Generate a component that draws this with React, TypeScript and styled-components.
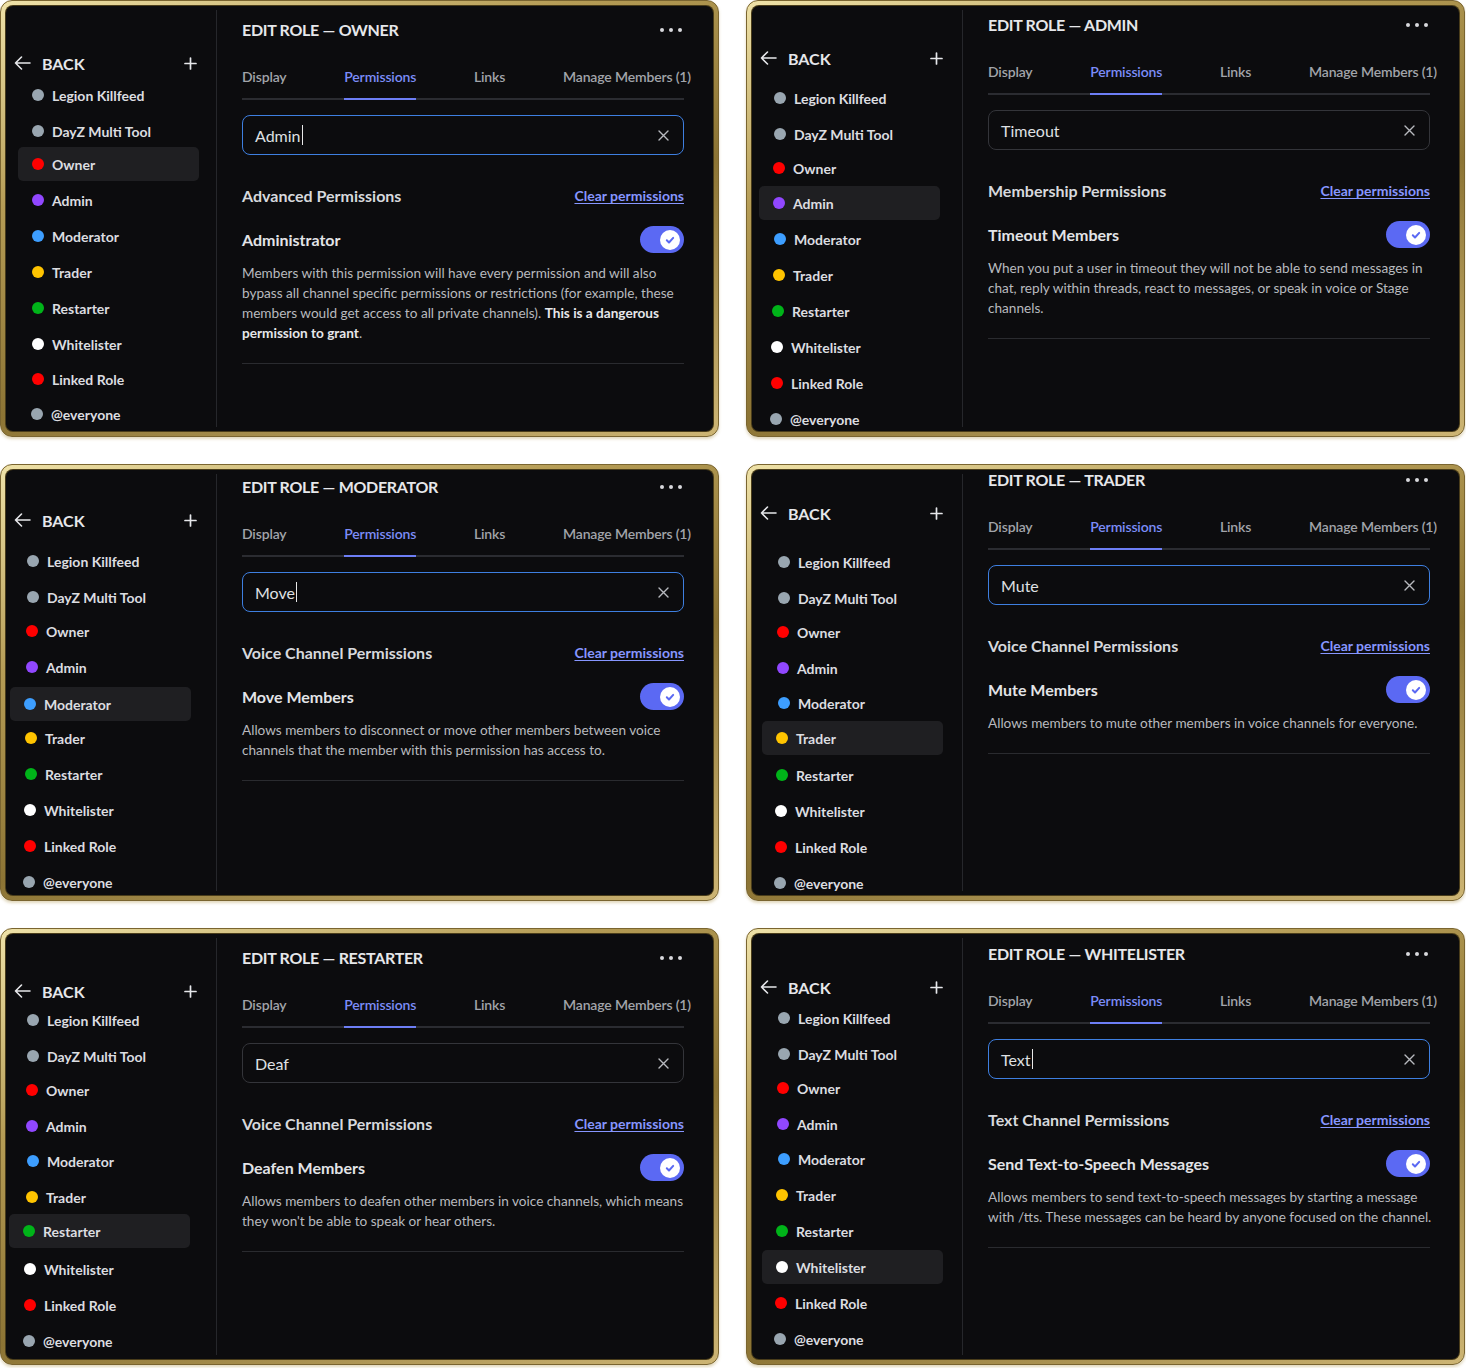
import React from "react";
import styled, { createGlobalStyle } from "styled-components";

const Global = createGlobalStyle`
  html, body { margin: 0; padding: 0; background: #ffffff; }
  body { font-family: Lato, "Noto Sans", sans-serif; -webkit-font-smoothing: antialiased; }
  * { box-sizing: border-box; }
`;

const Page = styled.div`
  display: grid;
  grid-template-columns: 719px 719px;
  grid-auto-rows: 437px;
  column-gap: 27px;
  row-gap: 27px;
  width: 1466px;
  height: 1368px;
`;

const Frame = styled.div`
  border-radius: 12px;
  padding: 5px;
  border: 1px solid #7a6530;
  background: linear-gradient(160deg, #efe2a8 0%, #b59c55 30%, #8c7434 60%, #cdb574 100%);
  box-shadow: 0 2px 3px rgba(190, 170, 110, 0.45);
`;

const Inner = styled.div`
  height: 100%;
  border-radius: 7px;
  background: #0c0c0e;
  box-shadow: 0 0 0 1px #4a3d1a;
  display: grid;
  grid-template-columns: 211px 1fr;
  overflow: hidden;
`;

const Sidebar = styled.div`
  margin: 4px 0;
  border-right: 1px solid #26272b;
  display: flex;
  flex-direction: column;
  overflow: hidden;
`;

const BackRow = styled.div<{ $top: number }>`
  margin-top: ${(p) => p.$top}px;
  height: 20px;
  display: flex;
  align-items: center;
  padding-left: 8px;
  padding-right: 19px;
  color: #e6e7ea;
  flex-shrink: 0;
`;

const BackLabel = styled.span`
  margin-left: 11px;
  font-size: 16px;
  font-weight: 700;
`;

const PlusWrap = styled.span`
  margin-left: auto;
  display: flex;
`;

const RoleItem = styled.div<{ $mt: number; $ml: number; $active: boolean }>`
  flex-shrink: 0;
  margin-top: ${(p) => p.$mt}px;
  margin-left: ${(p) => p.$ml}px;
  width: 181px;
  height: 34px;
  border-radius: 5px;
  background: ${(p) => (p.$active ? "#1f1f22" : "transparent")};
  display: flex;
  align-items: center;
  padding-left: 14px;
  gap: 8px;
  font-size: 14px;
  font-weight: 700;
  color: #dcdde0;
`;

const Dot = styled.span<{ $c: string }>`
  width: 12px;
  height: 12px;
  border-radius: 50%;
  background: ${(p) => p.$c};
  flex-shrink: 0;
`;

const Main = styled.div<{ $top: number }>`
  padding: ${(p) => p.$top}px 0 0 25px;
  display: flex;
  flex-direction: column;
  width: 466px;
`;

const TitleRow = styled.div`
  height: 20px;
  display: flex;
  align-items: center;
  justify-content: space-between;
  width: 442px;
`;

const Title = styled.h2`
  margin: 0;
  font-size: 16px;
  font-weight: 700;
  letter-spacing: -0.3px;
  color: #e6e7ea;
  line-height: 20px;
`;

const More = styled.div`
  display: flex;
  gap: 5px;
  margin-right: 2px;
`;

const MoreDot = styled.span`
  width: 4px;
  height: 4px;
  border-radius: 50%;
  background: #d8d9dc;
`;

const TabBar = styled.div`
  margin-top: 27px;
  border-bottom: 2px solid #2b2c31;
  width: 442px;
`;

const TabList = styled.div`
  display: flex;
  justify-content: space-between;
  margin-right: -7px;
`;

const Tab = styled.div<{ $active: boolean }>`
  font-size: 14px;
  font-weight: 600;
  line-height: 20px;
  letter-spacing: -0.15px;
  padding-bottom: 11px;
  margin-bottom: -2px;
  color: ${(p) => (p.$active ? "#7c8cf8" : "#a2a4aa")};
  border-bottom: 2px solid ${(p) => (p.$active ? "#6d7ef5" : "transparent")};
`;

const Search = styled.div<{ $focused: boolean }>`
  margin-top: 15px;
  width: 442px;
  height: 40px;
  border-radius: 8px;
  border: 1px solid ${(p) => (p.$focused ? "#3e7fe0" : "#34353a")};
  display: flex;
  align-items: center;
  padding: 0 14px 0 12px;
  font-size: 16px;
  color: #dfe0e3;
`;

const Caret = styled.span`
  display: inline-block;
  width: 1px;
  height: 20px;
  background: #e8e8e8;
  margin-left: 1px;
`;

const Query = styled.span`
  flex: 1;
  display: flex;
  align-items: center;
`;

const SectionHead = styled.div`
  margin-top: 31px;
  width: 442px;
  display: flex;
  justify-content: space-between;
  align-items: center;
  line-height: 20px;
`;

const SectionTitle = styled.span`
  font-size: 16px;
  font-weight: 700;
  color: #d7d9dd;
`;

const ClearLink = styled.a`
  font-size: 14px;
  font-weight: 700;
  color: #8796ff;
  text-decoration: underline;
  text-underline-offset: 2px;
`;

const PermRow = styled.div`
  margin-top: 20px;
  width: 442px;
  height: 27px;
  display: flex;
  justify-content: space-between;
  align-items: center;
`;

const PermName = styled.span`
  font-size: 16px;
  font-weight: 700;
  color: #e3e4e7;
`;

const Toggle = styled.div`
  width: 44px;
  height: 27px;
  border-radius: 14px;
  background: #5b69f3;
  display: flex;
  align-items: center;
  justify-content: flex-end;
  padding-right: 4px;
`;

const Knob = styled.span`
  width: 20px;
  height: 20px;
  border-radius: 50%;
  background: #ffffff;
  display: flex;
  align-items: center;
  justify-content: center;
`;

const Desc = styled.p`
  margin: 10px 0 0;
  width: 444px;
  font-size: 13.6px;
  line-height: 20px;
  color: #b8babf;
  strong { color: #e6e7ea; font-weight: 700; }
`;

const Divider = styled.div`
  margin-top: 20px;
  width: 442px;
  height: 1px;
  background: #2a2b2f;
`;

const ROLES: { name: string; color: string }[] = [
  { name: "Legion Killfeed", color: "#99a6b0" },
  { name: "DayZ Multi Tool", color: "#99a6b0" },
  { name: "Owner", color: "#ff0000" },
  { name: "Admin", color: "#9147ff" },
  { name: "Moderator", color: "#3d9eff" },
  { name: "Trader", color: "#ffc400" },
  { name: "Restarter", color: "#00b419" },
  { name: "Whitelister", color: "#ffffff" },
  { name: "Linked Role", color: "#ff0000" },
  { name: "@everyone", color: "#99a6b0" },
];

type PanelData = {
  role: string;
  titleY: number;
  selected: number;
  query: string;
  focused: boolean;
  caret: boolean;
  heading: string;
  perm: string;
  desc: React.ReactNode;
  ys: number[];
  xs: number[];
};

const PANELS: PanelData[] = [
  {
    role: "OWNER",
    titleY: 30,
    selected: 2,
    query: "Admin",
    focused: true,
    caret: true,
    heading: "Advanced Permissions",
    perm: "Administrator",
    desc: (
      <>
        Members with this permission will have every permission and will also bypass all channel specific
        permissions or restrictions (for example, these members would get access to all private channels).{" "}
        <strong>This is a dangerous permission to grant</strong>.
      </>
    ),
    ys: [66, 102, 135, 171, 207, 243, 279, 315, 350, 385],
    xs: [52, 52, 52, 52, 52, 52, 52, 52, 52, 51],
  },
  {
    role: "ADMIN",
    titleY: 25,
    selected: 3,
    query: "Timeout",
    focused: false,
    caret: false,
    heading: "Membership Permissions",
    perm: "Timeout Members",
    desc: (
      <>
        When you put a user in timeout they will not be able to send messages in chat, reply within threads,
        react to messages, or speak in voice or Stage channels.
      </>
    ),
    ys: [74, 110, 144, 179, 215, 251, 287, 323, 359, 395],
    xs: [48, 48, 47, 47, 48, 47, 46, 45, 45, 44],
  },
  {
    role: "MODERATOR",
    titleY: 23,
    selected: 4,
    query: "Move",
    focused: true,
    caret: true,
    heading: "Voice Channel Permissions",
    perm: "Move Members",
    desc: (
      <>
        Allows members to disconnect or move other members between voice channels that the member with this
        permission has access to.
      </>
    ),
    ys: [75, 111, 145, 181, 218, 252, 288, 324, 360, 396],
    xs: [47, 47, 46, 46, 44, 45, 45, 44, 44, 43],
  },
  {
    role: "TRADER",
    titleY: 16,
    selected: 5,
    query: "Mute",
    focused: true,
    caret: false,
    heading: "Voice Channel Permissions",
    perm: "Mute Members",
    desc: <>Allows members to mute other members in voice channels for everyone.</>,
    ys: [83, 119, 153, 189, 224, 259, 296, 332, 368, 404],
    xs: [52, 52, 51, 51, 52, 50, 50, 49, 49, 48],
  },
  {
    role: "RESTARTER",
    titleY: 30,
    selected: 6,
    query: "Deaf",
    focused: false,
    caret: false,
    heading: "Voice Channel Permissions",
    perm: "Deafen Members",
    desc: (
      <>
        Allows members to deafen other members in voice channels, which means they won't be able to speak or
        hear others.
      </>
    ),
    ys: [63, 99, 133, 169, 204, 240, 274, 312, 348, 384],
    xs: [47, 47, 46, 46, 47, 46, 43, 44, 44, 43],
  },
  {
    role: "WHITELISTER",
    titleY: 26,
    selected: 7,
    query: "Text",
    focused: true,
    caret: true,
    heading: "Text Channel Permissions",
    perm: "Send Text-to-Speech Messages",
    desc: (
      <>
        Allows members to send text-to-speech messages by starting a message with /tts. These messages can be
        heard by anyone focused on the channel.
      </>
    ),
    ys: [65, 101, 135, 171, 206, 242, 278, 314, 350, 386],
    xs: [52, 52, 51, 51, 52, 50, 50, 50, 49, 48],
  },
];

const ArrowLeft = () => (
  <svg width="17" height="14" viewBox="0 0 17 14" fill="none" stroke="#e6e7ea" strokeWidth="1.6" strokeLinecap="round" strokeLinejoin="round">
    <path d="M16 7H1.5M7.5 1L1.5 7l6 6" />
  </svg>
);

const Plus = () => (
  <svg width="13" height="13" viewBox="0 0 13 13" fill="none" stroke="#e6e7ea" strokeWidth="1.7" strokeLinecap="round">
    <path d="M6.5 1v11M1 6.5h11" />
  </svg>
);

const Close = () => (
  <svg width="11" height="11" viewBox="0 0 11 11" fill="none" stroke="#b8babf" strokeWidth="1.4" strokeLinecap="round">
    <path d="M1 1l9 9M10 1l-9 9" />
  </svg>
);

const Check = () => (
  <svg width="12" height="12" viewBox="0 0 12 12" fill="none" stroke="#5b69f3" strokeWidth="2" strokeLinecap="round" strokeLinejoin="round">
    <path d="M2.8 6.3l2.2 2.2 4.2-4.6" />
  </svg>
);

const Panel = ({ d }: { d: PanelData }) => (
  <Frame>
    <Inner>
      <Sidebar>
        <BackRow $top={d.titleY + 13}>
          <ArrowLeft />
          <BackLabel>BACK</BackLabel>
          <PlusWrap>
            <Plus />
          </PlusWrap>
        </BackRow>
        {ROLES.map((r, i) => (
          <RoleItem
            key={r.name}
            $active={i === d.selected}
            $ml={d.xs[i] - 40}
            $mt={i === 0 ? d.ys[0] - 61 : d.ys[i] - d.ys[i - 1] - 34}
          >
            <Dot $c={r.color} />
            {r.name}
          </RoleItem>
        ))}
      </Sidebar>
      <Main $top={d.titleY - 16}>
        <TitleRow>
          <Title>EDIT ROLE — {d.role}</Title>
          <More>
            <MoreDot />
            <MoreDot />
            <MoreDot />
          </More>
        </TitleRow>
        <TabBar>
          <TabList>
            <Tab $active={false}>Display</Tab>
            <Tab $active>Permissions</Tab>
            <Tab $active={false}>Links</Tab>
            <Tab $active={false}>Manage Members (1)</Tab>
          </TabList>
        </TabBar>
        <Search $focused={d.focused}>
          <Query>
            {d.query}
            {d.caret && <Caret />}
          </Query>
          <Close />
        </Search>
        <SectionHead>
          <SectionTitle>{d.heading}</SectionTitle>
          <ClearLink>Clear permissions</ClearLink>
        </SectionHead>
        <PermRow>
          <PermName>{d.perm}</PermName>
          <Toggle>
            <Knob>
              <Check />
            </Knob>
          </Toggle>
        </PermRow>
        <Desc>{d.desc}</Desc>
        <Divider />
      </Main>
    </Inner>
  </Frame>
);

export default function App() {
  return (
    <>
      <Global />
      <Page>
        {PANELS.map((p) => (
          <Panel key={p.role} d={p} />
        ))}
      </Page>
    </>
  );
}
